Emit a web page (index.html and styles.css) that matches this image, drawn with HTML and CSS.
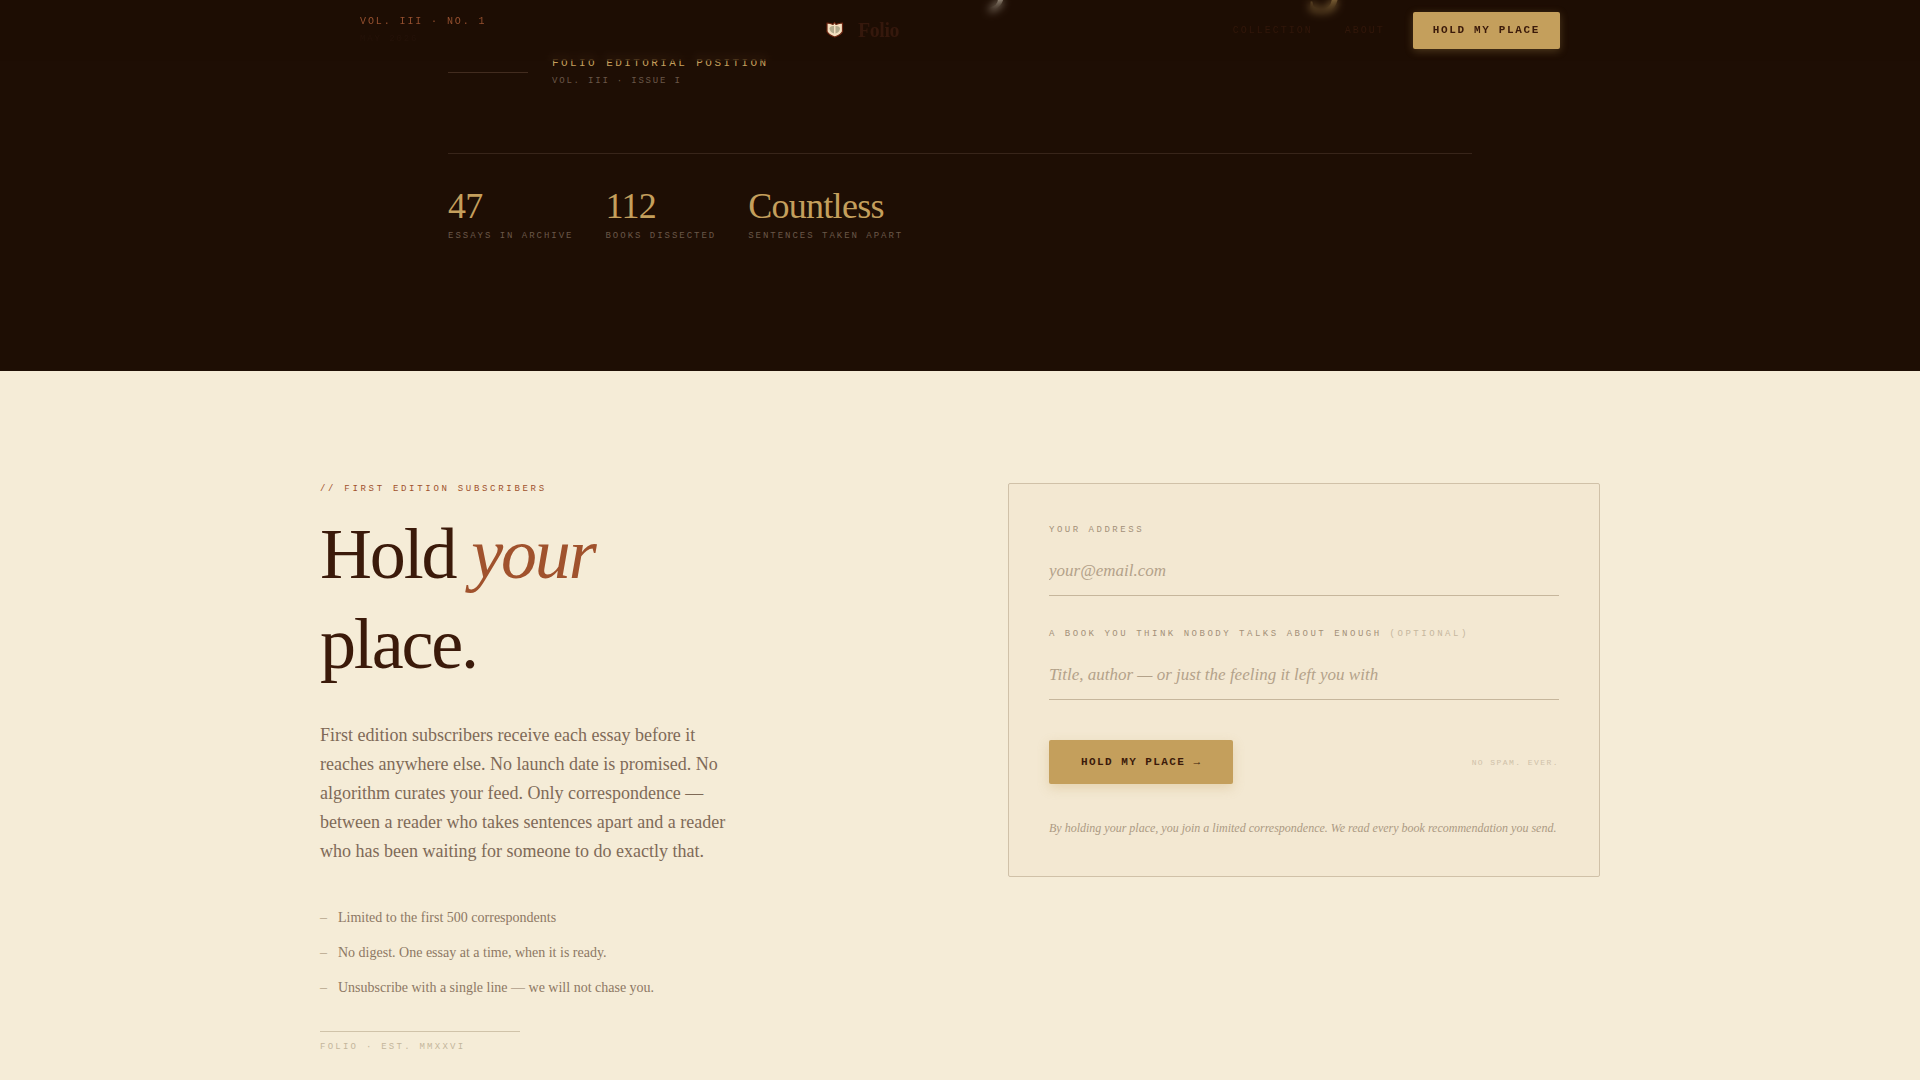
FILE: index.html
```html
<!DOCTYPE html>
<html lang="en">
<head>
    <meta charset="UTF-8">
    <title>Folio</title>
    <link rel="stylesheet" href="styles.css">
</head>
<body>
    <header class="masthead">
        <div class="masthead-inner">
            <div class="issue">
                <span class="issue-number">VOL. III · NO. 1</span>
                <span class="issue-date">MAY 2026</span>
            </div>
            <a class="logo" href="#">
                <svg class="logo-mark" viewBox="0 0 28 28" aria-hidden="true">
                    <path d="M7 6 L10.500 6.500 L13 7.500 L14.500 5.500 L16 7.500 L19 6.500 L22.500 6 L22.500 14.500 Q21.500 17.500 14.800 20 Q8 17.500 7 14.500 Z" fill="#f3dfc0" stroke="#6b2410" stroke-width="1.200" stroke-linejoin="round"/>
                    <path d="M14 9 Q10 8.500 9.500 11.500 Q10 15.500 14 16.500 Z" fill="#b3aa8c"/>
                    <path d="M15.500 9 Q19.500 8.500 20 11.500 Q19.500 15.500 15.500 16.500 Z" fill="#b3aa8c"/>
                </svg>
                <span>Folio</span>
            </a>
            <div class="masthead-right">
                <nav class="nav">
                    <a href="#">COLLECTION</a>
                    <a href="#">ABOUT</a>
                </nav>
                <button class="btn btn-small" type="button">HOLD MY PLACE</button>
            </div>
        </div>
    </header>

    <section class="hero">
        <div class="hero-inner">
            <p class="statement"><span>,</span><em>g</em></p>
            <div class="byline">
                <span class="byline-rule"></span>
                <div class="byline-text">
                    <span class="byline-name">FOLIO EDITORIAL POSITION</span>
                    <span class="byline-issue">VOL. III · ISSUE I</span>
                </div>
            </div>
            <div class="stats">
                <div class="stat">
                    <span class="stat-value">47</span>
                    <span class="stat-label">ESSAYS IN ARCHIVE</span>
                </div>
                <div class="stat">
                    <span class="stat-value">112</span>
                    <span class="stat-label">BOOKS DISSECTED</span>
                </div>
                <div class="stat">
                    <span class="stat-value">Countless</span>
                    <span class="stat-label">SENTENCES TAKEN APART</span>
                </div>
            </div>
        </div>
    </section>

    <section class="subscribe">
        <div class="subscribe-grid">
            <div class="pitch">
                <p class="eyebrow">// FIRST EDITION SUBSCRIBERS</p>
                <h2>Hold <em>your</em><br>place.</h2>
                <p class="lede">First edition subscribers receive each essay before it reaches anywhere else. No launch date is promised. No algorithm curates your feed. Only correspondence — between a reader who takes sentences apart and a reader who has been waiting for someone to do exactly that.</p>
                <ul class="terms">
                    <li>Limited to the first 500 correspondents</li>
                    <li>No digest. One essay at a time, when it is ready.</li>
                    <li>Unsubscribe with a single line — we will not chase you.</li>
                </ul>
                <p class="colophon">FOLIO · EST. MMXXVI</p>
            </div>

            <form class="card">
                <div class="field">
                    <label for="email">YOUR ADDRESS</label>
                    <input id="email" type="email" placeholder="your@email.com">
                </div>
                <div class="field">
                    <label for="book">A BOOK YOU THINK NOBODY TALKS ABOUT ENOUGH <span>(OPTIONAL)</span></label>
                    <input id="book" type="text" placeholder="Title, author — or just the feeling it left you with">
                </div>
                <div class="actions">
                    <button class="btn btn-large" type="submit">HOLD MY PLACE →</button>
                    <span class="no-spam">NO SPAM. EVER.</span>
                </div>
                <p class="fine-print">By holding your place, you join a limited correspondence. We read every book recommendation you send.</p>
            </form>
        </div>
    </section>
</body>
</html>
```
FILE: styles.css
```css
* {
    margin: 0;
    padding: 0;
    box-sizing: border-box;
}

:root {
    --ink: #3b1a0a;
    --night: #1e0e04;
    --paper: #f5ecd7;
    --gold: #c49f5c;
    --rust: #a0522d;
    --serif: "Liberation Serif", "Times New Roman", serif;
    --mono: "Liberation Mono", "Courier New", monospace;
}

body {
    min-height: 100vh;
    background: var(--paper);
    color: var(--ink);
    font-family: var(--serif);
}

a {
    color: inherit;
    text-decoration: none;
}

/* Masthead */
.masthead {
    position: fixed;
    top: 0;
    left: 0;
    right: 0;
    z-index: 10;
    background: rgba(30, 14, 4, 0.3);
    backdrop-filter: blur(4px);
}

.masthead-inner {
    display: flex;
    align-items: center;
    justify-content: space-between;
    max-width: 1280px;
    margin: 0 auto;
    padding: 12px 40px;
}

.issue {
    display: flex;
    flex-direction: column;
    gap: 4px;
    font-family: var(--mono);
    font-size: 10px;
    letter-spacing: 0.19em;
}

.issue-number {
    color: #95502f;
    line-height: 12px;
}

.issue-date {
    color: #241209;
    font-size: 9px;
    line-height: 14px;
}

.logo {
    display: flex;
    align-items: center;
    gap: 10px;
    color: #35180c;
    font-size: 20px;
    font-weight: 700;
    letter-spacing: -0.02em;
}

.logo-mark {
    width: 28px;
    height: 28px;
}

.masthead-right {
    display: flex;
    align-items: center;
    gap: 28px;
}

.nav {
    display: flex;
    gap: 32px;
    color: #32170a;
    font-family: var(--mono);
    font-size: 10px;
    letter-spacing: 0.2em;
}

.btn {
    border: none;
    border-radius: 2px;
    background: var(--gold);
    color: var(--ink);
    font-family: var(--mono);
    font-size: 11px;
    font-weight: 700;
    cursor: pointer;
}

.btn-small {
    padding: 12px 20px;
    line-height: 13px;
    letter-spacing: 0.15em;
    box-shadow: 0 2px 8px rgba(196, 159, 92, 0.3);
}

.btn-large {
    padding: 16px 32px;
    line-height: 12px;
    letter-spacing: 0.13em;
    box-shadow: 0 4px 12px rgba(196, 159, 92, 0.3);
}

/* Hero */
.hero {
    overflow: hidden;
    background: var(--night);
    color: var(--paper);
}

.hero-inner {
    max-width: 1024px;
    margin: 0 auto;
    padding-bottom: 129px;
}

.statement {
    display: flex;
    align-items: baseline;
    gap: 300px;
    margin-top: -80px;
    padding-left: 538px;
    font-size: 72px;
    line-height: 90px;
}

.statement span {
    font-size: 96px;
}

.statement em {
    color: var(--gold);
}

.byline {
    display: flex;
    align-items: center;
    gap: 24px;
    margin-top: 40px;
}

.byline-rule {
    width: 80px;
    height: 1px;
    background: #422c1f;
}

.byline-text {
    display: flex;
    flex-direction: column;
    gap: 6px;
    font-family: var(--mono);
}

.byline-name {
    color: var(--gold);
    font-size: 11px;
    line-height: 11px;
    letter-spacing: 0.22em;
}

.byline-issue {
    color: #6a5748;
    font-size: 9px;
    line-height: 12px;
    letter-spacing: 0.2em;
}

.stats {
    display: flex;
    gap: 32px;
    margin-top: 66px;
    padding-top: 34px;
    border-top: 1px solid #38251a;
}

.stat {
    display: flex;
    flex-direction: column;
    gap: 6px;
}

.stat-value {
    color: var(--gold);
    font-size: 36px;
    line-height: 36px;
    letter-spacing: -0.02em;
}

.stat-label {
    color: #6a5748;
    font-family: var(--mono);
    font-size: 9px;
    line-height: 12px;
    letter-spacing: 0.22em;
}

/* Subscribe */
.subscribe {
    padding: 112px 40px 28px;
}

.subscribe-grid {
    display: grid;
    grid-template-columns: 1fr 1fr;
    align-items: start;
    gap: 96px;
    max-width: 1280px;
    margin: 0 auto;
}

.eyebrow {
    color: var(--rust);
    font-family: var(--mono);
    font-size: 9px;
    line-height: 12px;
    letter-spacing: 0.3em;
}

.pitch h2 {
    margin-top: 14px;
    font-size: 72px;
    font-weight: 400;
    line-height: 90px;
    letter-spacing: -0.03em;
}

.pitch h2 em {
    color: var(--rust);
}

.lede {
    max-width: 420px;
    margin-top: 32px;
    color: #7f6a57;
    font-size: 18px;
    line-height: 29px;
}

.terms {
    display: flex;
    flex-direction: column;
    gap: 12px;
    margin-top: 40px;
    list-style: none;
}

.terms li {
    display: flex;
    gap: 11px;
    color: #8d7864;
    font-size: 14px;
    line-height: 23px;
}

.terms li::before {
    content: "–";
    color: #b5a48b;
}

.colophon {
    width: 200px;
    margin-top: 32px;
    padding-top: 9px;
    border-top: 1px solid #d0c3a9;
    color: #c4b69c;
    font-family: var(--mono);
    font-size: 9px;
    line-height: 12px;
    letter-spacing: 0.25em;
}

/* Form card */
.card {
    padding: 40px;
    border: 1px solid #d0c1a8;
    border-radius: 2px;
    background: #f3e8d2;
}

.field {
    display: flex;
    flex-direction: column;
    gap: 14px;
    margin-bottom: 32px;
}

.field label {
    color: #a39079;
    font-family: var(--mono);
    font-size: 9px;
    line-height: 12px;
    letter-spacing: 0.28em;
}

.field label span {
    color: #c6b79e;
}

.field input {
    width: 100%;
    padding: 10px 0 14px;
    border: none;
    border-bottom: 1px solid #c6b69c;
    background: none;
    color: var(--ink);
    font-family: var(--serif);
    font-size: 17px;
    font-style: italic;
    line-height: 21px;
    outline: none;
}

.field input::placeholder {
    color: #b3a28a;
}

.actions {
    display: flex;
    align-items: center;
    justify-content: space-between;
    margin-top: 40px;
}

.no-spam {
    color: #cfc1a9;
    font-family: var(--mono);
    font-size: 8px;
    letter-spacing: 0.18em;
}

.fine-print {
    margin-top: 36px;
    color: #ac9a83;
    font-size: 12px;
    font-style: italic;
    line-height: 16px;
}

@media (max-width: 900px) {
    .subscribe-grid {
        grid-template-columns: 1fr;
    }
}
```
